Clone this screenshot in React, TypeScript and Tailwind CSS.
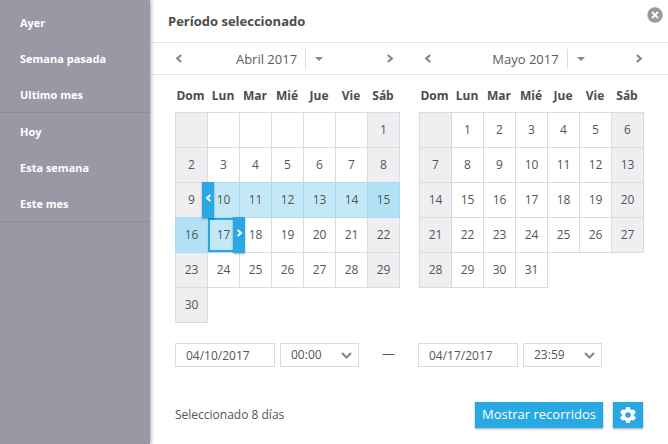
import React from "react";

const SHORTCUT_GROUPS = [
  ["Ayer", "Semana pasada", "Ultimo mes"],
  ["Hoy", "Esta semana", "Este mes"],
];
const WEEKDAYS = ["Dom", "Lun", "Mar", "Mié", "Jue", "Vie", "Sáb"];
const TIMES = ["00:00", "06:00", "12:00", "18:00", "23:59"];

type Range = { start: number; end: number };

function Chevron({ dir, className }: { dir: "left" | "right" | "down"; className: string }) {
  const d = { left: "M6.2 1 2.2 4.5 6.2 8", right: "M1.8 1 5.8 4.5 1.8 8", down: "M1 2 5.5 6.5 10 2" }[dir];
  return (
    <svg className={className} viewBox={dir === "down" ? "0 0 11 9" : "0 0 8 9"} fill="none" stroke="currentColor" strokeWidth="2.2" aria-hidden="true">
      <path d={d} />
    </svg>
  );
}

function MonthNav({ title, className, titleClass }: { title: string; className: string; titleClass: string }) {
  return (
    <div className={`flex flex-1 items-center justify-between ${className}`}>
      <button type="button" aria-label="Mes anterior" className="text-[#85859a]">
        <Chevron dir="left" className="h-[9px] w-2" />
      </button>
      <button type="button" className={`flex items-center text-[13px] leading-5 text-[#5c5c5c] ${titleClass}`}>
        {title}
        <span className="ml-2 flex h-5 items-center border-l border-[#dcdce0] pl-[9px]">
          <svg className="h-1 w-2" viewBox="0 0 8 4" fill="#85859a" aria-hidden="true">
            <path d="M0 0h8L4 4z" />
          </svg>
        </span>
      </button>
      <button type="button" aria-label="Mes siguiente" className="text-[#85859a]">
        <Chevron dir="right" className="h-[9px] w-2" />
      </button>
    </div>
  );
}

function Calendar({ label, offset, days, range }: { label: string; offset: number; days: number; range?: Range }) {
  const cells = [...Array(offset).fill(0), ...Array.from({ length: days }, (_, i) => i + 1)] as number[];
  const weeks: number[][] = [];
  for (let i = 0; i < cells.length; i += 7) weeks.push(cells.slice(i, i + 7));
  const picked = (d: number) => !!range && d >= range.start && d <= range.end;

  return (
    <table aria-label={label} className="table-fixed border-separate border-spacing-0 text-center text-xs text-[#555]">
      <thead>
        <tr>
          {WEEKDAYS.map((name) => (
            <th key={name} scope="col" className="h-[37px] w-8 p-0 pt-1 pr-0.5 font-bold text-[#4c4c4c] first:w-[33px]">
              {name}
            </th>
          ))}
        </tr>
      </thead>
      <tbody>
        {weeks.map((week, w) => (
          <tr key={w}>
            {week.map((day, c) => {
              const weekend = c === 0 || c === 6;
              const on = picked(day);
              const fill = on ? (weekend ? "bg-[#b2e1f6]" : "bg-[#c5e8f6]") : weekend ? "bg-[#efeff2]" : "bg-white";
              const right = on ? "border-r-[#a8dcf3]" : "border-r-[#dcdce0]";
              const bottom = on || picked(day + 7) ? "border-b-[#a8dcf3]" : "border-b-[#dcdce0]";
              const left = c > 0 ? "" : on ? "border-l border-l-[#a8dcf3]" : "border-l border-l-[#dcdce0]";
              const top = w === 0 ? "h-9 border-t border-t-[#dcdce0]" : "h-[35px]";
              return (
                <td key={c} className={`relative border-r border-b p-0 ${fill} ${right} ${bottom} ${left} ${top}`}>
                  {range && day === range.end && (
                    <span className="absolute inset-0 border-2 border-[#28a9e4]" />
                  )}
                  {day > 0 && <span className="relative">{day}</span>}
                  {range && day === range.start && (
                    <button type="button" aria-label="Mover inicio" className="absolute -top-px -left-1.5 z-10 flex h-9 w-3 items-center justify-center bg-[#28a9e4] text-white shadow-[0_1px_2px_rgba(0,0,0,0.35)]">
                      <Chevron dir="left" className="mb-1 h-2 w-[7px]" />
                    </button>
                  )}
                  {range && day === range.end && (
                    <button type="button" aria-label="Mover fin" className="absolute -top-px -right-1.5 z-10 flex h-9 w-3 items-center justify-center bg-[#28a9e4] text-white shadow-[0_1px_2px_rgba(0,0,0,0.35)]">
                      <Chevron dir="right" className="mb-1 h-2 w-[7px]" />
                    </button>
                  )}
                </td>
              );
            })}
          </tr>
        ))}
      </tbody>
    </table>
  );
}

function DateTime({ name, date, time }: { name: string; date: string; time: string }) {
  return (
    <div className="flex gap-[5px]">
      <input
        type="text"
        aria-label={`Fecha de ${name}`}
        defaultValue={date}
        className="h-6 w-[100px] border border-[#dcdce0] bg-white px-2.5 text-xs text-[#555] outline-none"
      />
      <div className="relative">
        <select
          aria-label={`Hora de ${name}`}
          defaultValue={time}
          className="block h-6 w-[79px] appearance-none border border-[#dcdce0] bg-white px-2.5 text-xs text-[#555] outline-none"
        >
          {TIMES.map((t) => (
            <option key={t}>{t}</option>
          ))}
        </select>
        <Chevron dir="down" className="pointer-events-none absolute top-2 right-[7px] h-[9px] w-[11px] text-[#85859a]" />
      </div>
    </div>
  );
}

export default function App() {
  return (
    <div className="flex min-h-screen bg-white font-['Open_Sans','Noto_Sans',sans-serif] text-[#555]">
      <nav aria-label="Períodos rápidos" className="z-10 w-[150px] shrink-0 bg-[#9999a5] pt-1 shadow-[1px_0_4px_rgba(0,0,0,0.35)]">
        {SHORTCUT_GROUPS.map((group) => (
          <ul key={group[0]} className="border-b border-[#8b8b98]">
            {group.map((item) => (
              <li key={item}>
                <button type="button" className="h-9 w-full px-5 pt-0.5 text-left text-[11px] font-bold text-white">
                  {item}
                </button>
              </li>
            ))}
          </ul>
        ))}
      </nav>

      <main className="min-w-0 flex-1">
        <header className="flex h-[43px] items-start justify-between border-b border-[#e6e6e8] pr-[5px] pl-[18px]">
          <h1 className="text-[13px] leading-[43px] font-bold text-[#4c4c4c]">Período seleccionado</h1>
          <button type="button" aria-label="Cerrar" className="mt-[7px]">
            <svg className="h-4 w-4" viewBox="0 0 16 16" aria-hidden="true">
              <circle cx="8" cy="8" r="7.7" fill="#9999a5" />
              <path d="M5 5l6 6M11 5l-6 6" stroke="#fff" strokeWidth="1.8" />
            </svg>
          </button>
        </header>

        <div className="flex h-8 border-b border-[#e6e6e8]">
          <MonthNav title="Abril 2017" className="pr-[15px] pl-[25px]" titleClass="pr-2.5" />
          <MonthNav title="Mayo 2017" className="pr-[25px] pl-[15px]" titleClass="pl-2.5" />
        </div>

        <div className="flex min-h-[248px] items-start gap-[19px] pr-6 pl-[25px]">
          <Calendar label="Abril 2017" offset={6} days={30} range={{ start: 10, end: 17 }} />
          <Calendar label="Mayo 2017" offset={1} days={31} />
        </div>

        <div className="mt-5 flex items-center pl-[25px]">
          <DateTime name="inicio" date="04/10/2017" time="00:00" />
          <span className="w-[59px] pb-1 text-center text-[13px] leading-5">—</span>
          <DateTime name="fin" date="04/17/2017" time="23:59" />
        </div>

        <footer className="mt-[35px] flex items-center pr-[25px] pl-[25px]">
          <p className="flex-1 text-xs">Seleccionado 8 días</p>
          <button type="button" className="h-[26px] w-32 bg-[#28a9e4] text-[13px] font-medium text-white shadow-[0_1px_2px_rgba(0,0,0,0.35)]">
            Mostrar recorridos
          </button>
          <button type="button" aria-label="Configuración" className="ml-2.5 flex h-[26px] w-[30px] items-center justify-center bg-[#28a9e4] shadow-[0_1px_2px_rgba(0,0,0,0.35)]">
            <svg className="h-4 w-4" viewBox="0 0 16 16" aria-hidden="true">
              <g fill="#fff">
                <circle cx="8" cy="8" r="6.2" />
                <rect x="5.8" y="0" width="4.4" height="16" rx="1.2" />
                <rect x="5.8" y="0" width="4.4" height="16" rx="1.2" transform="rotate(60 8 8)" />
                <rect x="5.8" y="0" width="4.4" height="16" rx="1.2" transform="rotate(120 8 8)" />
              </g>
              <circle cx="8" cy="8" r="2.8" fill="#28a9e4" />
            </svg>
          </button>
        </footer>
      </main>
    </div>
  );
}
